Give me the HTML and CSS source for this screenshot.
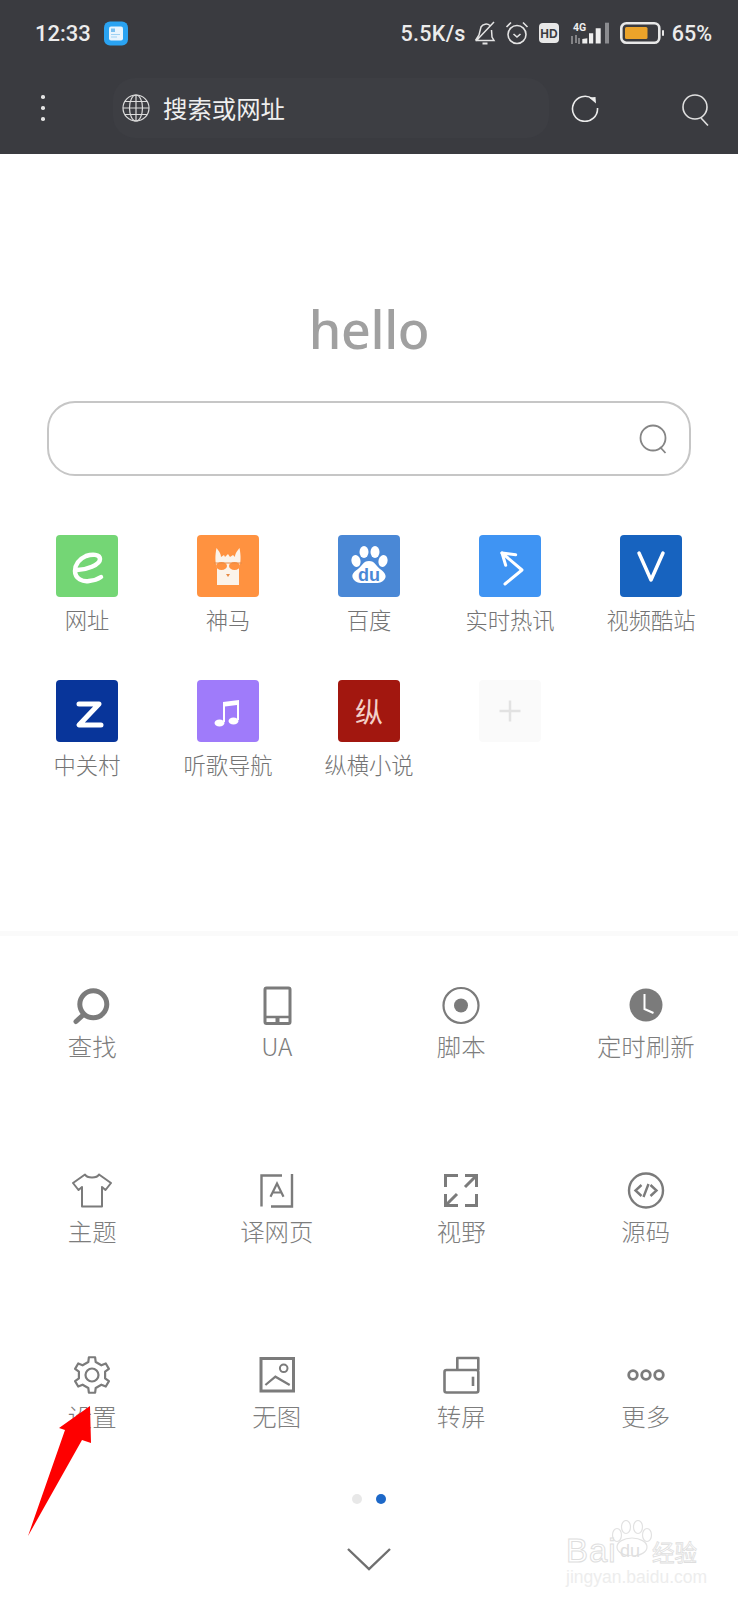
FILE: index.html
```html
<!DOCTYPE html>
<html lang="zh-CN">
<head>
<meta charset="utf-8">
<title>hello</title>
<link rel="stylesheet" href="styles.css">
</head>
<body>
<div class="screen">
  <header class="topbar">
    <div class="status">
      <span class="time">12:33</span>
      <svg class="app-badge" viewBox="0 0 24 24"><rect width="24" height="24" rx="6" fill="#2aa3f2"/><rect x="5" y="5" width="14" height="14" rx="2" fill="#e8f4fd"/><rect x="7" y="7" width="4" height="3.5" fill="#7cc0ef"/><path d="M7 13h9M7 15.5h6" stroke="#9fd2f4" stroke-width="1"/></svg>
      <span class="spacer"></span>
      <span class="speed">5.5K/s</span>
      <svg class="st-bell" viewBox="0 0 22 24" fill="none" stroke="#e4e4e4" stroke-width="1.5"><path d="M1.500 19.500h18.500l-2-3.500-.5-7M16 4.500a6 6 0 0 0-9 1.500L5 14l-3.500 5.500M2 20 20 1"/><path d="M8.500 22.500h5" stroke-width="2"/></svg>
      <svg class="st-alarm" viewBox="0 0 24 24" fill="none" stroke="#e4e4e4" stroke-width="1.6"><circle cx="12" cy="13.5" r="9"/><path d="M8.500 13l3.500 3 3.500-3M1.500 6 6 1.500M22.500 6 18 1.500"/></svg>
      <svg class="st-hd" viewBox="0 0 20 20"><rect width="20" height="20" rx="4" fill="#e8e8e8"/><text x="10" y="14.500" class="hd-text">HD</text></svg>
      <svg class="st-signal" viewBox="0 0 40 22"><text x="3" y="8.500" class="sig-text">4G</text><path d="M2 14v8M6 13v8M9 16v6" stroke="#ccc" stroke-width="1" fill="none"/><path d="M12.300 21.500v-4.500l5-.7v5.200zM19 21.500V11.300h4.200v10.200zM25.700 21.500V6.300h5v15.200z" fill="#eee"/><path d="M35 21.500V.7h4v20.800z" fill="#8b8c90"/></svg>
      <svg class="st-batt" viewBox="0 0 44 22"><rect x="1.300" y="1.300" width="38" height="19.400" rx="5" fill="none" stroke="#e8e8e8" stroke-width="2.600"/><rect x="5" y="5" width="22.500" height="12" rx="1.500" fill="#eba32a"/><rect x="42" y="8" width="2" height="6" rx="1" fill="#e8e8e8"/></svg>
      <span class="pct">65%</span>
    </div>
    <div class="toolbar">
      <div class="kebab"><i></i><i></i><i></i></div>
      <div class="address">
        <svg class="globe" viewBox="0 0 28 28" fill="none" stroke="#dcdcdc" stroke-width="1.200"><circle cx="14" cy="14" r="13"/><ellipse cx="14" cy="14" rx="6.500" ry="13"/><path d="M14 1v26M1 14h26M3 7.500h22M3 20.500h22"/></svg>
        <span class="address-text">搜索或网址</span>
      </div>
      <svg class="refresh" viewBox="0 0 28 28" fill="none" stroke="#ececec" stroke-width="1.600"><path d="M21.500 4.800A12.500 12.500 0 1 0 26.500 14"/><path d="M18 3.500l6.500-.5.500 6.500z" fill="#ececec" stroke="none"/></svg>
      <svg class="tool-search" viewBox="0 0 30 32" fill="none" stroke="#e0e0e0" stroke-width="1.600"><circle cx="14" cy="13" r="12"/><path d="M20 24l7 7.500"/></svg>
    </div>
  </header>

  <main class="home">
    <h1 class="hello">hello</h1>
    <div class="searchbox">
      <svg class="box-search" viewBox="0 0 30 30" fill="none" stroke="#858585" stroke-width="1.800"><circle cx="14" cy="14" r="12.500"/><path d="M21 23l5.500 6"/></svg>
    </div>
    <div class="tiles">
      <div class="tile"><span class="logo c-green"><svg viewBox="0 0 62 62" fill="none" stroke="#fff" stroke-width="4.500" stroke-linecap="round"><path d="M21 35C30 35 44 30 44 24 44 19 36 19 30 21 23 24 19 30 19 36 19 44 27 47 33 46 38 45.500 42 44 45 42"/></svg></span><span class="name">网址</span></div>
      <div class="tile"><span class="logo c-orange"><svg viewBox="0 0 62 62"><path d="M20 50V33C18 28 18 20 19.500 13 21 15 24 18 24 22L27 20 28 22 31 19 33 22 36 20 38 22C38 18 41 15 42.500 13 44 20 44 28 42 33V50z" fill="#fbf3ea"/><ellipse cx="24.500" cy="31" rx="5.500" ry="4" fill="#ff9240"/><ellipse cx="37.500" cy="31" rx="5.500" ry="4" fill="#ff9240"/><path d="M17 28h28" stroke="#e88a45" stroke-width="1"/><path d="M29 39h4l-2 3z" fill="#e88a45"/></svg></span><span class="name">神马</span></div>
      <div class="tile"><span class="logo c-blue"><svg viewBox="0 0 62 62" fill="#fff"><ellipse cx="18" cy="26" rx="4.500" ry="6" transform="rotate(-15 18 26)"/><ellipse cx="26" cy="17" rx="4.500" ry="6"/><ellipse cx="37" cy="17" rx="4.500" ry="6"/><ellipse cx="45" cy="26" rx="4.500" ry="6" transform="rotate(15 45 26)"/><path d="M31 26c6 0 7 5 11 8 6 4 7 8 4 11-3 4-9 3-15 3s-12 1-15-3-2-7 4-11c4-3 5-8 11-8z"/><text x="31" y="46" class="du-text">du</text></svg></span><span class="name">百度</span></div>
      <div class="tile"><span class="logo c-sky"><svg viewBox="0 0 62 62" fill="none" stroke="#fff" stroke-width="3" stroke-linecap="round" stroke-linejoin="round"><path d="M26 49 43 35 23 18"/><path d="M23 18l13.700 1.700M23 18l3.700 12.300"/></svg></span><span class="name">实时热讯</span></div>
      <div class="tile"><span class="logo c-navy"><svg viewBox="0 0 62 62" fill="none" stroke="#fff" stroke-width="3.500" stroke-linecap="round" stroke-linejoin="round"><path d="M19 18 31 45 43 18"/></svg></span><span class="name">视频酷站</span></div>
      <div class="tile"><span class="logo c-dark"><svg viewBox="0 0 62 62" fill="none" stroke="#fff" stroke-width="5" stroke-linecap="round" stroke-linejoin="round"><path d="M23 24h20L23 45h22"/></svg></span><span class="name">中关村</span></div>
      <div class="tile"><span class="logo c-purple"><svg viewBox="0 0 62 62" fill="#fff"><ellipse cx="22.500" cy="43" rx="5" ry="3.500"/><ellipse cx="36.500" cy="41" rx="5" ry="3.500"/><path d="M26 42V22l16-2V40h-2V25l-12 1.500V42z"/></svg></span><span class="name">听歌导航</span></div>
      <div class="tile"><span class="logo c-red">纵</span><span class="name">纵横小说</span></div>
      <div class="tile"><span class="logo c-add"><svg viewBox="0 0 62 62" fill="none" stroke="#e2e2e2" stroke-width="2.500"><path d="M31 20.500v21M20.500 31h21"/></svg></span></div>
    </div>
  </main>

  <section class="menu">
    <div class="item"><svg viewBox="0 0 40 40" fill="none" stroke="#7b7b7b" stroke-width="5"><circle cx="21.300" cy="19.300" r="13.500"/><path d="M10 31 4 36.500" stroke-linecap="round"/></svg><span>查找</span></div>
    <div class="item"><svg viewBox="0 0 40 40" fill="none" stroke="#7b7b7b" stroke-width="3"><rect x="8" y="3" width="25" height="35.500" rx="1.500"/><path d="M8 32h25" stroke-width="2.500"/><path d="M20.500 32v6" stroke-width="4"/></svg><span>UA</span></div>
    <div class="item"><svg viewBox="0 0 40 40"><circle cx="20" cy="20.500" r="17.500" fill="none" stroke="#7b7b7b" stroke-width="2.200"/><circle cx="20" cy="20.500" r="7" fill="#7b7b7b"/></svg><span>脚本</span></div>
    <div class="item"><svg viewBox="0 0 40 40"><circle cx="20" cy="20" r="16.500" fill="#7b7b7b"/><path d="M18.500 9v15l9 4" fill="none" stroke="#fff" stroke-width="2"/></svg><span>定时刷新</span></div>
    <div class="item"><svg viewBox="0 0 40 40" fill="none" stroke="#7b7b7b" stroke-width="2" stroke-linejoin="round"><path d="M13 4.500c2 4 12 4 14 0L39 13l-5.500 7-3.500-3v19.500H10V17l-3.500 3L1 13z"/></svg><span>主题</span></div>
    <div class="item"><svg viewBox="0 0 40 40" fill="none" stroke="#7b7b7b" stroke-width="2.400"><path d="M25 5.500H4.500V36.500M35 4v32.500H14"/><path d="M13.500 26.700 20 13.500l6.500 13.200M15.500 22.500h9" stroke-width="2.200"/></svg><span>译网页</span></div>
    <div class="item"><svg viewBox="0 0 40 40" fill="none" stroke="#7b7b7b" stroke-width="3"><path d="M4.500 17V5.500H17M24 5.500H35.500V17M35.500 5.500 24 17M4.500 24V35.500H17M4.500 35.500 16 24M24 35.500H35.500V24"/></svg><span>视野</span></div>
    <div class="item"><svg viewBox="0 0 40 40" fill="none" stroke="#7b7b7b" stroke-width="2.400"><circle cx="20" cy="20.500" r="17"/><path d="M15.500 15l-6 5.500 6 5.500M24.500 15l6 5.500-6 5.500M22.500 14l-5 13"/></svg><span>源码</span></div>
    <div class="item"><svg viewBox="0 0 40 40" fill="none" stroke="#7b7b7b" stroke-width="2.200" stroke-linejoin="round"><path d="M16.280 7.020 16.870 2.270H23.130L23.720 7.020 29.380 10.290 33.790 8.430 36.910 13.840 33.100 16.730V23.270L36.910 26.160 33.790 31.570 29.380 29.710 23.720 32.980 23.130 37.730H16.870L16.280 32.980 10.620 29.710 6.210 31.570 3.090 26.160 6.900 23.270V16.730L3.090 13.840 6.210 8.430 10.620 10.290z"/><circle cx="20" cy="20" r="6.500"/></svg><span>设置</span></div>
    <div class="item"><svg viewBox="0 0 40 40" fill="none" stroke="#7b7b7b"><rect x="4" y="3.500" width="32.500" height="32.500" stroke-width="3"/><circle cx="26.700" cy="13.300" r="3.800" stroke-width="2"/><path d="M8.400 30l10-8.300L32.700 30" stroke-width="2.200"/></svg><span>无图</span></div>
    <div class="item"><svg viewBox="0 0 40 40" fill="none" stroke="#7b7b7b" stroke-width="2.600" stroke-linejoin="round"><path d="M16.300 14.500V3H37.300V15"/><rect x="3.500" y="15" width="33.800" height="22.500" rx="2"/><path d="M32 21.700V31"/></svg><span>转屏</span></div>
    <div class="item"><svg viewBox="0 0 40 40" fill="none" stroke="#7b7b7b" stroke-width="2.800"><circle cx="7" cy="20" r="4.300"/><circle cx="20" cy="20" r="4.300"/><circle cx="33" cy="20" r="4.300"/></svg><span>更多</span></div>
  </section>

  <div class="dots"><i class="dot"></i><i class="dot on"></i></div>
  <svg class="chevron" viewBox="0 0 44 24" fill="none" stroke="#6f6f6f" stroke-width="2.400"><path d="M1 1l21 20L43 1"/></svg>

  <div class="watermark">
    <svg class="wm-paw" viewBox="0 0 42 36" fill="none" stroke="#e2e2e2" stroke-width="1.200"><ellipse cx="6" cy="15" rx="4.500" ry="6.500"/><ellipse cx="15" cy="7" rx="4.500" ry="6.500"/><ellipse cx="27" cy="7" rx="4.500" ry="6.500"/><ellipse cx="36" cy="15" rx="4.500" ry="6.500"/><ellipse cx="21" cy="27" rx="15" ry="9"/></svg>
    <span class="wm-bai">Bai</span>
    <span class="wm-du">du</span>
    <span class="wm-jy">经验</span>
    <span class="wm-sub">jingyan.baidu.com</span>
  </div>

  <svg class="arrow" viewBox="0 0 70 135"><path d="M65 1 66 38 57 35 3 131 40 25 34 23z" fill="#fe0000"/></svg>
</div>
</body>
</html>
```
FILE: styles.css
```css
* { box-sizing: border-box; }
html, body { margin: 0; padding: 0; background: #fff; }
body { font-family: "Noto Sans CJK SC", "Noto Sans", sans-serif; }
.screen { position: relative; width: 738px; height: 1600px; overflow: hidden; display: flex; flex-direction: column; }

.topbar { height: 154px; background: #3a3b40; color: #ececec; flex: none; }
.status { height: 66px; display: flex; align-items: center; padding: 0 26px 0 35px; }
.time { font: 500 22px Roboto, sans-serif; width: 69px; }
.app-badge { width: 24px; height: 25px; }
.spacer { flex: 1; }
.speed { font: 500 21.500px Roboto, sans-serif; letter-spacing: .3px; margin-right: 8px; }
.st-bell { width: 22px; height: 24px; margin-right: 9px; }
.st-alarm { width: 24px; height: 24px; margin-right: 10px; }
.st-hd { width: 20px; height: 20px; margin-right: 11px; }
.hd-text { font: 700 12px "Liberation Sans", sans-serif; text-anchor: middle; fill: #3a3b40; }
.st-signal { width: 40px; height: 22px; margin-right: 10px; }
.sig-text { font: 700 10.500px Roboto, sans-serif; fill: #eee; }
.st-batt { width: 44px; height: 22px; margin-right: 8px; }
.pct { font: 500 21.500px Roboto, sans-serif; }

.toolbar { height: 88px; display: flex; align-items: center; }
.kebab { width: 113px; padding-left: 41px; display: flex; flex-direction: column; gap: 7.500px; margin-top: -4px; }
.kebab i { width: 3.500px; height: 3.500px; border-radius: 50%; background: #e4e4e4; }
.address { width: 436px; height: 60px; border-radius: 22px; background: #3d3e43; display: flex; align-items: center; padding-left: 9px; margin-top: -5px; }
.globe { width: 28px; height: 28px; margin-right: 13px; }
.address-text { font-size: 24.400px; color: #efefef; }
.refresh { width: 28px; height: 28px; margin-left: 22px; margin-top: -4px; }
.tool-search { width: 30px; height: 32px; margin-left: 82px; }

.home { height: 782px; flex: none; display: flex; flex-direction: column; border-bottom: 5px solid #fafafa; }
.hello { margin: 145px 0 0; height: 60px; font: 500 52px/60px "Noto Sans", sans-serif; letter-spacing: -.4px; color: #a0a0a0; text-align: center; }
.searchbox { margin: 42px 47px 0 47px; height: 75px; border: 2px solid #c6c6c6; border-radius: 28px; display: flex; align-items: center; justify-content: flex-end; padding-right: 20px; }
.box-search { width: 30px; height: 30px; }
.tiles { margin-top: 59px; padding-left: 16.500px; display: grid; grid-template-columns: repeat(5, 141px); grid-auto-rows: 145px; }
.tile { display: flex; flex-direction: column; align-items: center; }
.logo { width: 62px; height: 62px; border-radius: 4px; display: flex; align-items: center; justify-content: center; color: #f3d0c8; font-size: 28px; }
.logo svg { width: 62px; height: 62px; display: block; }
.name { font-size: 22.300px; font-weight: 300; line-height: 30px; margin-top: 7px; color: #747474; white-space: nowrap; }
.c-green { background: #74d675; }
.c-orange { background: #ff9240; }
.c-blue { background: #4a88d6; }
.c-sky { background: #3f94f3; }
.c-navy { background: #1763bf; }
.c-dark { background: #08359a; }
.c-purple { background: #9f7bfa; }
.c-red { background: #a2170f; }
.c-add { background: #fafafa; }
.du-text { font: 700 18px "Liberation Sans", sans-serif; text-anchor: middle; fill: #4a88d6; }

.menu { padding-top: 49px; display: grid; grid-template-columns: repeat(4, 184.500px); grid-auto-rows: 185px; flex: none; }
.item { display: flex; flex-direction: column; align-items: center; }
.item svg { width: 40px; height: 40px; display: block; }
.item span { font-size: 24.400px; line-height: 32px; margin-top: 5px; color: #7d7d7d; font-weight: 300; }

.dots { position: absolute; left: 352px; top: 1494px; display: flex; gap: 14px; }
.dot { width: 10px; height: 10px; border-radius: 50%; background: #e8e8e8; }
.dot.on { background: #1d68c8; }
.chevron { position: absolute; left: 347px; top: 1548px; width: 44px; height: 24px; }

.watermark { position: absolute; left: 566px; top: 1520px; width: 132px; height: 64px; }
.wm-paw { position: absolute; left: 45px; top: 0; width: 42px; height: 36px; }
.wm-bai { position: absolute; left: 0; top: 12px; font: 400 33px/38px "Liberation Sans", sans-serif; letter-spacing: 1px; color: #fff; -webkit-text-stroke: 1px #dedede; }
.wm-du { position: absolute; left: 54px; top: 21px; font: 400 18px/20px "Liberation Sans", sans-serif; color: #e0e0e0; }
.wm-jy { position: absolute; left: 86px; top: 16px; font: 400 22.500px/30px "Noto Sans CJK SC", sans-serif; color: #fff; -webkit-text-stroke: .8px #dedede; white-space: nowrap; }
.wm-sub { position: absolute; left: 0; top: 48px; font: 400 17.500px/18px "Liberation Sans", sans-serif; color: #ededed; white-space: nowrap; }

.arrow { position: absolute; left: 25px; top: 1405px; width: 70px; height: 135px; }
```
